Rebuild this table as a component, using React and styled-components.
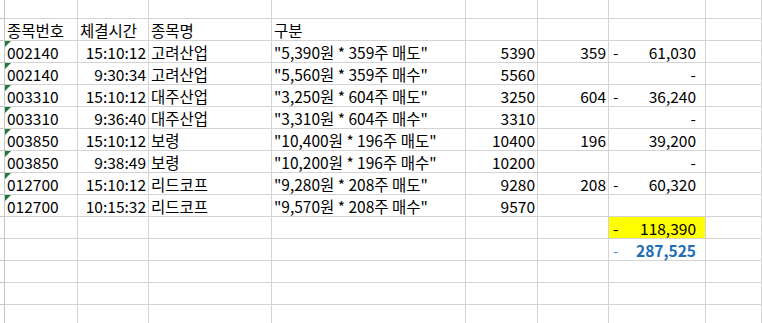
import styled, { createGlobalStyle } from "styled-components";

const Global = createGlobalStyle`
    body {
        margin: 0;
        background: #ffffff;
        overflow: hidden;
    }
`

const Sheet = styled.div`
    display: grid;
    grid-template-columns: 5px 73px 71px 123px 194px 72px 71px 97px 1fr;
    grid-template-rows: 19px;
    grid-auto-rows: 22px;
    width: 762px;
    height: 323px;
    overflow: hidden;
    font-family: "Noto Sans CJK KR", "Noto Sans", sans-serif;
    font-size: 15.5px;
    color: #000000;
    background: #ffffff;
`

const Stub = styled.div`
    border-right: 1px solid #c6c6c6;
    border-bottom: 1px solid #c6c6c6;
    background: #ffffff;
`

const Cell = styled.div`
    position: relative;
    display: flex;
    align-items: flex-end;
    justify-content: ${(p) => (p.$align === "right" ? "flex-end" : "flex-start")};
    padding: 0 ${(p) => (p.$align === "right" ? "2px" : "2px")} 0 2px;
    border-right: 1px solid #d4d4d4;
    border-bottom: 1px solid #d4d4d4;
    background: ${(p) => p.$fill || "transparent"};
    line-height: 20px;
    white-space: nowrap;
    overflow: visible;
    box-sizing: border-box;
`

const Flag = styled.span`
    position: absolute;
    left: 0;
    top: 0;
    width: 0;
    height: 0;
    border-top: 6px solid #1e7b3c;
    border-right: 6px solid transparent;
`

const Accounting = styled(Cell)`
    justify-content: space-between;
    padding: 0 9px 0 4px;
    color: ${(p) => p.$color || "#000000"};
    font-weight: ${(p) => (p.$bold ? 700 : 400)};
`

const Dash = styled.span`
    color: ${(p) => p.$color || "inherit"};
    font-weight: 400;
`

const headers = ["종목번호", "체결시간", "종목명", "구분", "", "", "", ""];

const rows = [
    ["002140", "15:10:12", "고려산업", "\"5,390원 * 359주 매도\"", "5390", "359", true, "61,030"],
    ["002140", "9:30:34", "고려산업", "\"5,560원 * 359주 매수\"", "5560", "", false, "-"],
    ["003310", "15:10:12", "대주산업", "\"3,250원 * 604주 매도\"", "3250", "604", true, "36,240"],
    ["003310", "9:36:40", "대주산업", "\"3,310원 * 604주 매수\"", "3310", "", false, "-"],
    ["003850", "15:10:12", "보령", "\"10,400원 * 196주 매도\"", "10400", "196", false, "39,200"],
    ["003850", "9:38:49", "보령", "\"10,200원 * 196주 매수\"", "10200", "", false, "-"],
    ["012700", "15:10:12", "리드코프", "\"9,280원 * 208주 매도\"", "9280", "208", true, "60,320"],
    ["012700", "10:15:32", "리드코프", "\"9,570원 * 208주 매수\"", "9570", "", false, ""],
];

function EmptyRow() {
    return (
        <>
            <Stub />
            {Array.from({ length: 8 }).map((_, i) => <Cell key={i} />)}
        </>
    )
}

export default function App() {
    return (
        <>
            <Global />
            <Sheet>
                <EmptyRow />

                <Stub />
                {headers.map((h, i) => <Cell key={i}>{h}</Cell>)}

                {rows.map((r, i) => (
                    <Row key={i} r={r} />
                ))}

                <Stub />
                {Array.from({ length: 6 }).map((_, i) => <Cell key={i} />)}
                <Accounting $fill="#ffff00">
                    <Dash>-</Dash>
                    <span>118,390</span>
                </Accounting>
                <Cell />

                <Stub />
                {Array.from({ length: 6 }).map((_, i) => <Cell key={i} />)}
                <Accounting $color="#1f6db4" $bold>
                    <Dash $color="#5f8fc4">-</Dash>
                    <span>287,525</span>
                </Accounting>
                <Cell />

                <EmptyRow />
                <EmptyRow />
                <EmptyRow />
                <EmptyRow />
            </Sheet>
        </>
    )
}

function Row({ r }) {
    const [code, time, name, desc, price, qty, neg, amount] = r;
    return (
        <>
            <Stub />
            <Cell><Flag />{code}</Cell>
            <Cell $align="right">{time}</Cell>
            <Cell>{name}</Cell>
            <Cell>{desc}</Cell>
            <Cell $align="right">{price}</Cell>
            <Cell $align="right">{qty}</Cell>
            <Accounting>
                <Dash>{neg ? "-" : ""}</Dash>
                <span>{amount}</span>
            </Accounting>
            <Cell />
        </>
    )
}
